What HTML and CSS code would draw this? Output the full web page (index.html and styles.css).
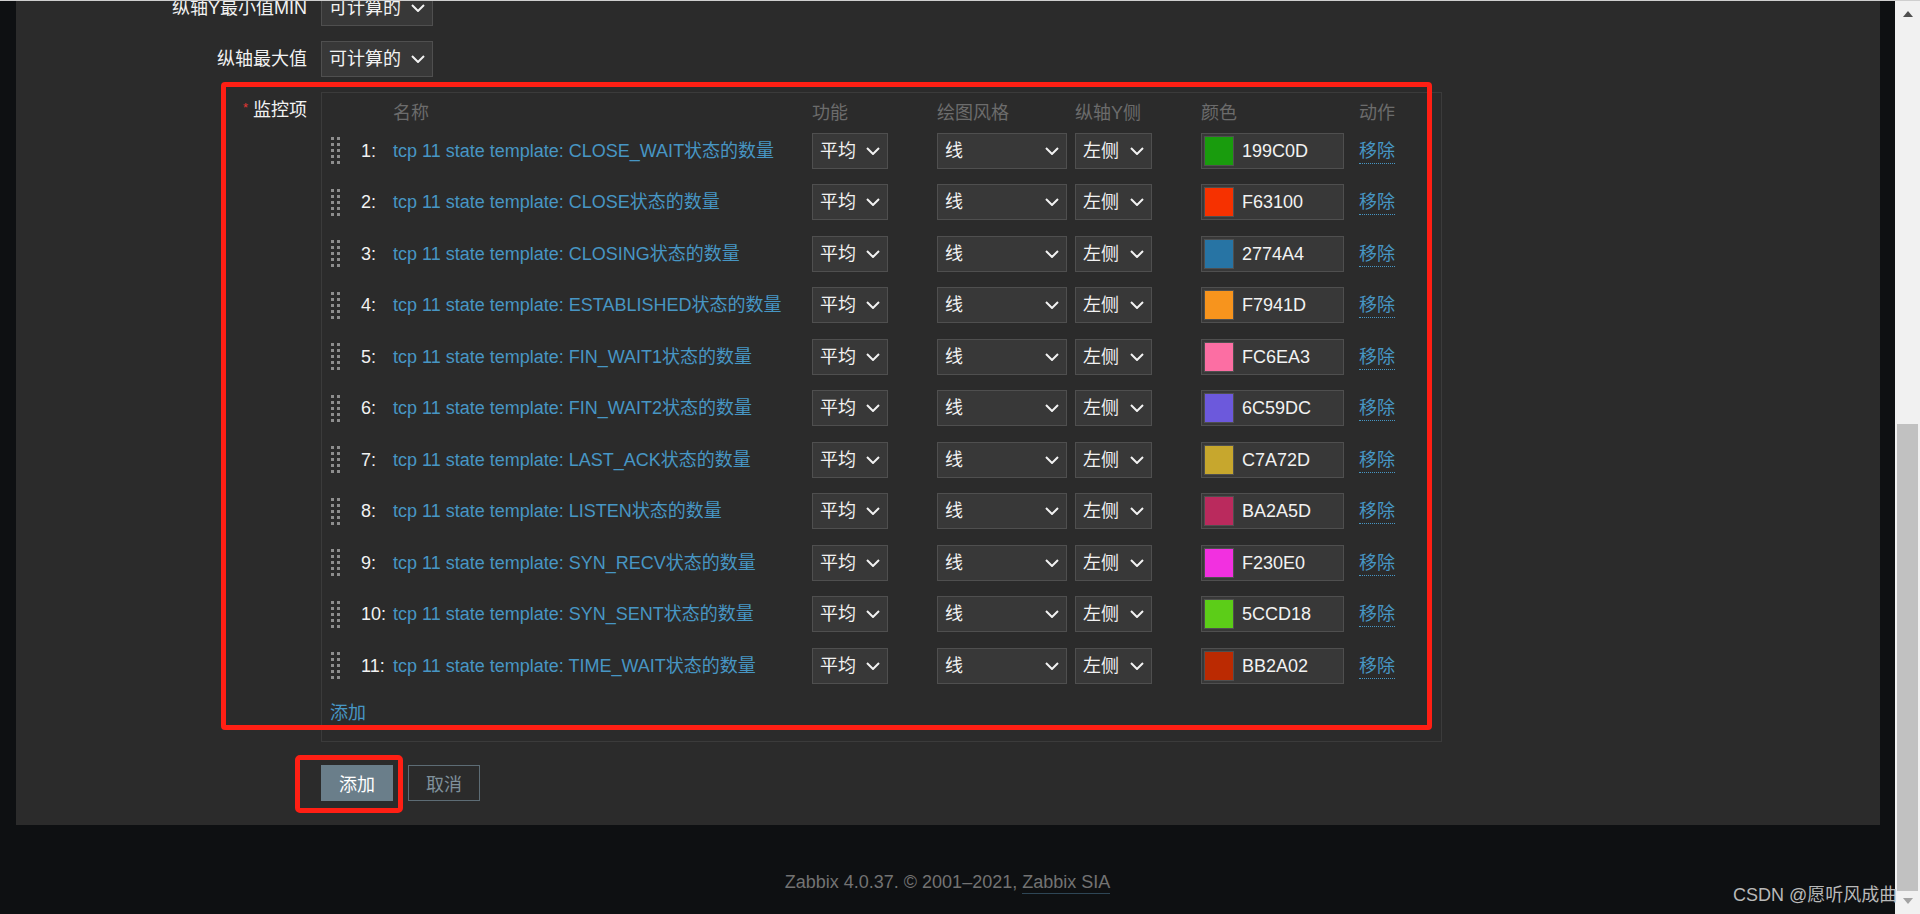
FILE: index.html
```html
<!DOCTYPE html>
<html lang="zh-CN">
<head>
<meta charset="utf-8">
<title>Zabbix graph items</title>
<link rel="stylesheet" href="styles.css">
</head>
<body>
<div class="screen">
  <div class="viewport">
    <div class="canvas">
      <main class="panel">
        <div class="form">
          <div class="form-row">
            <div class="label">纵轴Y最小值MIN</div>
            <div class="field">
              <div class="select s-calc"><span>可计算的</span><svg class="chev" viewBox="0 0 14 8"><path d="M1 1l6 6 6-6"/></svg></div>
            </div>
          </div>
          <div class="form-row">
            <div class="label">纵轴最大值</div>
            <div class="field">
              <div class="select s-calc"><span>可计算的</span><svg class="chev" viewBox="0 0 14 8"><path d="M1 1l6 6 6-6"/></svg></div>
            </div>
          </div>
          <div class="form-row">
            <div class="label"><span class="req">*</span>监控项</div>
            <div class="field">
              <div class="items">
                <div class="grid head">
                  <div></div><div></div>
                  <div class="c-name">名称</div>
                  <div>功能</div>
                  <div>绘图风格</div>
                  <div>纵轴Y侧</div>
                  <div>颜色</div>
                  <div>动作</div>
                </div>

                <div class="grid item">
                  <svg class="drag" viewBox="0 0 9 27"><g><rect x="0" y="0" width="3" height="3"/><rect x="6" y="0" width="3" height="3"/><rect x="0" y="6" width="3" height="3"/><rect x="6" y="6" width="3" height="3"/><rect x="0" y="12" width="3" height="3"/><rect x="6" y="12" width="3" height="3"/><rect x="0" y="18" width="3" height="3"/><rect x="6" y="18" width="3" height="3"/><rect x="0" y="24" width="3" height="3"/><rect x="6" y="24" width="3" height="3"/></g></svg>
                  <div class="num">1:</div>
                  <div class="c-name"><span class="name">tcp 11 state template: CLOSE_WAIT状态的数量</span></div>
                  <div class="select s-func"><span>平均</span><svg class="chev" viewBox="0 0 14 8"><path d="M1 1l6 6 6-6"/></svg></div>
                  <div class="select s-style"><span>线</span><svg class="chev" viewBox="0 0 14 8"><path d="M1 1l6 6 6-6"/></svg></div>
                  <div class="select s-axis"><span>左侧</span><svg class="chev" viewBox="0 0 14 8"><path d="M1 1l6 6 6-6"/></svg></div>
                  <div class="color-input"><span class="swatch" style="background:#199C0D"></span><span>199C0D</span></div>
                  <div><span class="remove">移除</span></div>
                </div>

                <div class="grid item">
                  <svg class="drag" viewBox="0 0 9 27"><g><rect x="0" y="0" width="3" height="3"/><rect x="6" y="0" width="3" height="3"/><rect x="0" y="6" width="3" height="3"/><rect x="6" y="6" width="3" height="3"/><rect x="0" y="12" width="3" height="3"/><rect x="6" y="12" width="3" height="3"/><rect x="0" y="18" width="3" height="3"/><rect x="6" y="18" width="3" height="3"/><rect x="0" y="24" width="3" height="3"/><rect x="6" y="24" width="3" height="3"/></g></svg>
                  <div class="num">2:</div>
                  <div class="c-name"><span class="name">tcp 11 state template: CLOSE状态的数量</span></div>
                  <div class="select s-func"><span>平均</span><svg class="chev" viewBox="0 0 14 8"><path d="M1 1l6 6 6-6"/></svg></div>
                  <div class="select s-style"><span>线</span><svg class="chev" viewBox="0 0 14 8"><path d="M1 1l6 6 6-6"/></svg></div>
                  <div class="select s-axis"><span>左侧</span><svg class="chev" viewBox="0 0 14 8"><path d="M1 1l6 6 6-6"/></svg></div>
                  <div class="color-input"><span class="swatch" style="background:#F63100"></span><span>F63100</span></div>
                  <div><span class="remove">移除</span></div>
                </div>

                <div class="grid item">
                  <svg class="drag" viewBox="0 0 9 27"><g><rect x="0" y="0" width="3" height="3"/><rect x="6" y="0" width="3" height="3"/><rect x="0" y="6" width="3" height="3"/><rect x="6" y="6" width="3" height="3"/><rect x="0" y="12" width="3" height="3"/><rect x="6" y="12" width="3" height="3"/><rect x="0" y="18" width="3" height="3"/><rect x="6" y="18" width="3" height="3"/><rect x="0" y="24" width="3" height="3"/><rect x="6" y="24" width="3" height="3"/></g></svg>
                  <div class="num">3:</div>
                  <div class="c-name"><span class="name">tcp 11 state template: CLOSING状态的数量</span></div>
                  <div class="select s-func"><span>平均</span><svg class="chev" viewBox="0 0 14 8"><path d="M1 1l6 6 6-6"/></svg></div>
                  <div class="select s-style"><span>线</span><svg class="chev" viewBox="0 0 14 8"><path d="M1 1l6 6 6-6"/></svg></div>
                  <div class="select s-axis"><span>左侧</span><svg class="chev" viewBox="0 0 14 8"><path d="M1 1l6 6 6-6"/></svg></div>
                  <div class="color-input"><span class="swatch" style="background:#2774A4"></span><span>2774A4</span></div>
                  <div><span class="remove">移除</span></div>
                </div>

                <div class="grid item">
                  <svg class="drag" viewBox="0 0 9 27"><g><rect x="0" y="0" width="3" height="3"/><rect x="6" y="0" width="3" height="3"/><rect x="0" y="6" width="3" height="3"/><rect x="6" y="6" width="3" height="3"/><rect x="0" y="12" width="3" height="3"/><rect x="6" y="12" width="3" height="3"/><rect x="0" y="18" width="3" height="3"/><rect x="6" y="18" width="3" height="3"/><rect x="0" y="24" width="3" height="3"/><rect x="6" y="24" width="3" height="3"/></g></svg>
                  <div class="num">4:</div>
                  <div class="c-name"><span class="name">tcp 11 state template: ESTABLISHED状态的数量</span></div>
                  <div class="select s-func"><span>平均</span><svg class="chev" viewBox="0 0 14 8"><path d="M1 1l6 6 6-6"/></svg></div>
                  <div class="select s-style"><span>线</span><svg class="chev" viewBox="0 0 14 8"><path d="M1 1l6 6 6-6"/></svg></div>
                  <div class="select s-axis"><span>左侧</span><svg class="chev" viewBox="0 0 14 8"><path d="M1 1l6 6 6-6"/></svg></div>
                  <div class="color-input"><span class="swatch" style="background:#F7941D"></span><span>F7941D</span></div>
                  <div><span class="remove">移除</span></div>
                </div>

                <div class="grid item">
                  <svg class="drag" viewBox="0 0 9 27"><g><rect x="0" y="0" width="3" height="3"/><rect x="6" y="0" width="3" height="3"/><rect x="0" y="6" width="3" height="3"/><rect x="6" y="6" width="3" height="3"/><rect x="0" y="12" width="3" height="3"/><rect x="6" y="12" width="3" height="3"/><rect x="0" y="18" width="3" height="3"/><rect x="6" y="18" width="3" height="3"/><rect x="0" y="24" width="3" height="3"/><rect x="6" y="24" width="3" height="3"/></g></svg>
                  <div class="num">5:</div>
                  <div class="c-name"><span class="name">tcp 11 state template: FIN_WAIT1状态的数量</span></div>
                  <div class="select s-func"><span>平均</span><svg class="chev" viewBox="0 0 14 8"><path d="M1 1l6 6 6-6"/></svg></div>
                  <div class="select s-style"><span>线</span><svg class="chev" viewBox="0 0 14 8"><path d="M1 1l6 6 6-6"/></svg></div>
                  <div class="select s-axis"><span>左侧</span><svg class="chev" viewBox="0 0 14 8"><path d="M1 1l6 6 6-6"/></svg></div>
                  <div class="color-input"><span class="swatch" style="background:#FC6EA3"></span><span>FC6EA3</span></div>
                  <div><span class="remove">移除</span></div>
                </div>

                <div class="grid item">
                  <svg class="drag" viewBox="0 0 9 27"><g><rect x="0" y="0" width="3" height="3"/><rect x="6" y="0" width="3" height="3"/><rect x="0" y="6" width="3" height="3"/><rect x="6" y="6" width="3" height="3"/><rect x="0" y="12" width="3" height="3"/><rect x="6" y="12" width="3" height="3"/><rect x="0" y="18" width="3" height="3"/><rect x="6" y="18" width="3" height="3"/><rect x="0" y="24" width="3" height="3"/><rect x="6" y="24" width="3" height="3"/></g></svg>
                  <div class="num">6:</div>
                  <div class="c-name"><span class="name">tcp 11 state template: FIN_WAIT2状态的数量</span></div>
                  <div class="select s-func"><span>平均</span><svg class="chev" viewBox="0 0 14 8"><path d="M1 1l6 6 6-6"/></svg></div>
                  <div class="select s-style"><span>线</span><svg class="chev" viewBox="0 0 14 8"><path d="M1 1l6 6 6-6"/></svg></div>
                  <div class="select s-axis"><span>左侧</span><svg class="chev" viewBox="0 0 14 8"><path d="M1 1l6 6 6-6"/></svg></div>
                  <div class="color-input"><span class="swatch" style="background:#6C59DC"></span><span>6C59DC</span></div>
                  <div><span class="remove">移除</span></div>
                </div>

                <div class="grid item">
                  <svg class="drag" viewBox="0 0 9 27"><g><rect x="0" y="0" width="3" height="3"/><rect x="6" y="0" width="3" height="3"/><rect x="0" y="6" width="3" height="3"/><rect x="6" y="6" width="3" height="3"/><rect x="0" y="12" width="3" height="3"/><rect x="6" y="12" width="3" height="3"/><rect x="0" y="18" width="3" height="3"/><rect x="6" y="18" width="3" height="3"/><rect x="0" y="24" width="3" height="3"/><rect x="6" y="24" width="3" height="3"/></g></svg>
                  <div class="num">7:</div>
                  <div class="c-name"><span class="name">tcp 11 state template: LAST_ACK状态的数量</span></div>
                  <div class="select s-func"><span>平均</span><svg class="chev" viewBox="0 0 14 8"><path d="M1 1l6 6 6-6"/></svg></div>
                  <div class="select s-style"><span>线</span><svg class="chev" viewBox="0 0 14 8"><path d="M1 1l6 6 6-6"/></svg></div>
                  <div class="select s-axis"><span>左侧</span><svg class="chev" viewBox="0 0 14 8"><path d="M1 1l6 6 6-6"/></svg></div>
                  <div class="color-input"><span class="swatch" style="background:#C7A72D"></span><span>C7A72D</span></div>
                  <div><span class="remove">移除</span></div>
                </div>

                <div class="grid item">
                  <svg class="drag" viewBox="0 0 9 27"><g><rect x="0" y="0" width="3" height="3"/><rect x="6" y="0" width="3" height="3"/><rect x="0" y="6" width="3" height="3"/><rect x="6" y="6" width="3" height="3"/><rect x="0" y="12" width="3" height="3"/><rect x="6" y="12" width="3" height="3"/><rect x="0" y="18" width="3" height="3"/><rect x="6" y="18" width="3" height="3"/><rect x="0" y="24" width="3" height="3"/><rect x="6" y="24" width="3" height="3"/></g></svg>
                  <div class="num">8:</div>
                  <div class="c-name"><span class="name">tcp 11 state template: LISTEN状态的数量</span></div>
                  <div class="select s-func"><span>平均</span><svg class="chev" viewBox="0 0 14 8"><path d="M1 1l6 6 6-6"/></svg></div>
                  <div class="select s-style"><span>线</span><svg class="chev" viewBox="0 0 14 8"><path d="M1 1l6 6 6-6"/></svg></div>
                  <div class="select s-axis"><span>左侧</span><svg class="chev" viewBox="0 0 14 8"><path d="M1 1l6 6 6-6"/></svg></div>
                  <div class="color-input"><span class="swatch" style="background:#BA2A5D"></span><span>BA2A5D</span></div>
                  <div><span class="remove">移除</span></div>
                </div>

                <div class="grid item">
                  <svg class="drag" viewBox="0 0 9 27"><g><rect x="0" y="0" width="3" height="3"/><rect x="6" y="0" width="3" height="3"/><rect x="0" y="6" width="3" height="3"/><rect x="6" y="6" width="3" height="3"/><rect x="0" y="12" width="3" height="3"/><rect x="6" y="12" width="3" height="3"/><rect x="0" y="18" width="3" height="3"/><rect x="6" y="18" width="3" height="3"/><rect x="0" y="24" width="3" height="3"/><rect x="6" y="24" width="3" height="3"/></g></svg>
                  <div class="num">9:</div>
                  <div class="c-name"><span class="name">tcp 11 state template: SYN_RECV状态的数量</span></div>
                  <div class="select s-func"><span>平均</span><svg class="chev" viewBox="0 0 14 8"><path d="M1 1l6 6 6-6"/></svg></div>
                  <div class="select s-style"><span>线</span><svg class="chev" viewBox="0 0 14 8"><path d="M1 1l6 6 6-6"/></svg></div>
                  <div class="select s-axis"><span>左侧</span><svg class="chev" viewBox="0 0 14 8"><path d="M1 1l6 6 6-6"/></svg></div>
                  <div class="color-input"><span class="swatch" style="background:#F230E0"></span><span>F230E0</span></div>
                  <div><span class="remove">移除</span></div>
                </div>

                <div class="grid item">
                  <svg class="drag" viewBox="0 0 9 27"><g><rect x="0" y="0" width="3" height="3"/><rect x="6" y="0" width="3" height="3"/><rect x="0" y="6" width="3" height="3"/><rect x="6" y="6" width="3" height="3"/><rect x="0" y="12" width="3" height="3"/><rect x="6" y="12" width="3" height="3"/><rect x="0" y="18" width="3" height="3"/><rect x="6" y="18" width="3" height="3"/><rect x="0" y="24" width="3" height="3"/><rect x="6" y="24" width="3" height="3"/></g></svg>
                  <div class="num">10:</div>
                  <div class="c-name"><span class="name">tcp 11 state template: SYN_SENT状态的数量</span></div>
                  <div class="select s-func"><span>平均</span><svg class="chev" viewBox="0 0 14 8"><path d="M1 1l6 6 6-6"/></svg></div>
                  <div class="select s-style"><span>线</span><svg class="chev" viewBox="0 0 14 8"><path d="M1 1l6 6 6-6"/></svg></div>
                  <div class="select s-axis"><span>左侧</span><svg class="chev" viewBox="0 0 14 8"><path d="M1 1l6 6 6-6"/></svg></div>
                  <div class="color-input"><span class="swatch" style="background:#5CCD18"></span><span>5CCD18</span></div>
                  <div><span class="remove">移除</span></div>
                </div>

                <div class="grid item">
                  <svg class="drag" viewBox="0 0 9 27"><g><rect x="0" y="0" width="3" height="3"/><rect x="6" y="0" width="3" height="3"/><rect x="0" y="6" width="3" height="3"/><rect x="6" y="6" width="3" height="3"/><rect x="0" y="12" width="3" height="3"/><rect x="6" y="12" width="3" height="3"/><rect x="0" y="18" width="3" height="3"/><rect x="6" y="18" width="3" height="3"/><rect x="0" y="24" width="3" height="3"/><rect x="6" y="24" width="3" height="3"/></g></svg>
                  <div class="num">11:</div>
                  <div class="c-name"><span class="name">tcp 11 state template: TIME_WAIT状态的数量</span></div>
                  <div class="select s-func"><span>平均</span><svg class="chev" viewBox="0 0 14 8"><path d="M1 1l6 6 6-6"/></svg></div>
                  <div class="select s-style"><span>线</span><svg class="chev" viewBox="0 0 14 8"><path d="M1 1l6 6 6-6"/></svg></div>
                  <div class="select s-axis"><span>左侧</span><svg class="chev" viewBox="0 0 14 8"><path d="M1 1l6 6 6-6"/></svg></div>
                  <div class="color-input"><span class="swatch" style="background:#BB2A02"></span><span>BB2A02</span></div>
                  <div><span class="remove">移除</span></div>
                </div>

                <div class="add-row"><span class="add-link">添加</span></div>
              </div>
            </div>
          </div>
          <div class="form-row buttons-row">
            <div class="label"></div>
            <div class="field buttons">
              <button class="btn">添加</button>
              <button class="btn btn-alt">取消</button>
            </div>
          </div>
        </div>
      </main>
    </div>
    <footer class="footer">Zabbix 4.0.37. © 2001–2021, <span class="footer-link">Zabbix SIA</span></footer>
  </div>
  <div class="scrollbar">
    <div class="sb-arrow up"></div>
    <div class="sb-track"><div class="sb-thumb"></div></div>
    <div class="sb-arrow down"></div>
  </div>
</div>
<div class="mark mark-items"></div>
<div class="mark mark-button"></div>
<div class="watermark">CSDN @愿听风成曲</div>
</body>
</html>
```

FILE: styles.css
```css
html, body {
  margin: 0;
  padding: 0;
}
body {
  position: relative;
  height: 914px;
  overflow: hidden;
  background: #0e1012;
  color: #f2f2f2;
  font-family: "Liberation Sans", Arial, "Noto Sans CJK SC", sans-serif;
  font-size: 18px;
  line-height: 18px;
}
.screen {
  display: flex;
  height: 914px;
  box-sizing: border-box;
  border-top: 1px solid #cfcfcf;
}
.viewport {
  flex: 1;
  display: flex;
  flex-direction: column;
  overflow: hidden;
}
.canvas {
  display: flex;
  padding: 0 15px 0 16px;
}
.panel {
  flex: 1;
  background: #2b2b2b;
  padding-bottom: 24px;
}
.form {
  margin-top: -11px;
}
.form-row {
  display: grid;
  grid-template-columns: 291px 1fr;
  column-gap: 14px;
  margin-bottom: 15px;
}
.form-row.buttons-row {
  margin-top: 23px;
  margin-bottom: 0;
}
.label {
  text-align: right;
  line-height: 36px;
  white-space: nowrap;
}
.req {
  color: #e33734;
  font-size: 13px;
  margin-right: 5px;
  position: relative;
  top: -4px;
}
.field {
  display: flex;
  align-items: flex-start;
}

/* selects */
.select {
  display: flex;
  align-items: center;
  justify-content: space-between;
  box-sizing: border-box;
  height: 36px;
  padding: 0 7px 0 7px;
  background: #383838;
  border: 1px solid #4f4f4f;
  color: #f2f2f2;
  white-space: nowrap;
}
.chev {
  width: 14px;
  height: 8px;
  flex: none;
}
.chev path {
  fill: none;
  stroke: #f2f2f2;
  stroke-width: 2;
}
.s-calc { width: 112px; }
.s-func { width: 76px; }
.s-style { width: 130px; }
.s-axis { width: 77px; }

/* items table */
.items {
  width: 1121px;
  box-sizing: border-box;
  border: 1px solid #3b3b3b;
}
.grid {
  display: grid;
  grid-template-columns: 31px 32px 419px 125px 138px 126px 158px 1fr;
  padding-left: 8px;
  align-items: center;
}
.head {
  height: 32px;
  box-sizing: border-box;
  padding-top: 11px;
  align-items: start;
  color: #6c6c6c;
}
.c-name {
  white-space: nowrap;
}
.item {
  height: 51.5px;
}
.drag {
  width: 9px;
  height: 27px;
  margin-left: 1px;
}
.drag rect {
  fill: #8e8e8e;
}
.num {
  color: #f2f2f2;
  white-space: nowrap;
}
.name {
  color: #4796c4;
}
.color-input {
  display: flex;
  align-items: center;
  box-sizing: border-box;
  width: 143px;
  height: 36px;
  padding-left: 2px;
  background: #383838;
  border: 1px solid #4f4f4f;
  color: #f2f2f2;
}
.swatch {
  width: 30px;
  height: 30px;
  box-sizing: border-box;
  border: 1px solid #4f4f4f;
  margin-right: 8px;
  flex: none;
}
.remove {
  color: #4796c4;
  border-bottom: 1px dotted #4796c4;
  padding-bottom: 2px;
}
.add-row {
  height: 49.5px;
  box-sizing: border-box;
  padding: 12px 0 0 8px;
}
.add-link {
  color: #4796c4;
  border-bottom: 1px solid #2f5670;
  padding-bottom: 2px;
}

/* buttons */
.buttons {
  gap: 15px;
}
.btn {
  width: 72px;
  height: 36px;
  box-sizing: border-box;
  border: 1px solid #6a7e8a;
  background: #6a7e8a;
  color: #ffffff;
  font-family: inherit;
  font-size: 18px;
  padding: 0;
}
.btn-alt {
  background: transparent;
  border-color: #5d6c75;
  color: #7f909b;
}

/* footer */
.footer {
  flex: 1;
  text-align: center;
  padding-top: 48px;
  color: #737373;
}
.footer-link {
  border-bottom: 1px solid #2e4656;
  padding-bottom: 1px;
}

/* scrollbar */
.scrollbar {
  width: 25px;
  background: #f1f1f1;
  display: flex;
  flex-direction: column;
  align-items: center;
}
.sb-arrow {
  width: 0;
  height: 0;
  border-left: 5.5px solid transparent;
  border-right: 5.5px solid transparent;
}
.sb-arrow.up {
  margin-top: 10px;
  border-bottom: 6px solid #505050;
}
.sb-arrow.down {
  margin-bottom: 10px;
  border-top: 6px solid #a3a3a3;
}
.sb-track {
  flex: 1;
  align-self: stretch;
  display: flex;
  flex-direction: column;
  justify-content: flex-end;
  padding: 0 2px 7px 2px;
}
.sb-thumb {
  height: 467px;
  background: #c1c1c1;
}

/* annotations */
.mark {
  position: absolute;
  box-sizing: border-box;
  border: 5px solid #ff1f14;
  border-radius: 4px;
  pointer-events: none;
}
.mark-items {
  left: 221px;
  top: 82px;
  width: 1211px;
  height: 648px;
}
.mark-button {
  left: 295px;
  top: 755px;
  width: 108px;
  height: 58px;
  border-radius: 5px;
}
.watermark {
  position: absolute;
  left: 1733px;
  top: 886px;
  color: #b9b9b9;
  font-size: 18px;
  line-height: 18px;
  white-space: nowrap;
}
```
